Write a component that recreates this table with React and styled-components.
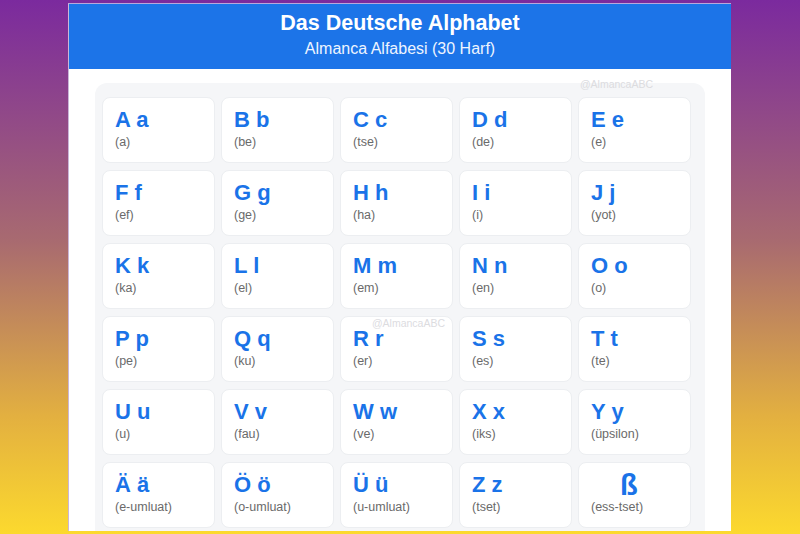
import styled, { createGlobalStyle } from 'styled-components';

const GlobalStyle = createGlobalStyle`
  html, body {
    margin: 0;
    padding: 0;
  }
  body {
    width: 800px;
    height: 534px;
    overflow: hidden;
    background: linear-gradient(180deg, #7b2a9e 0%, #a86a70 45%, #e3b040 78%, #fcd92e 100%);
    font-family: 'Liberation Sans', Arial, sans-serif;
  }
`;

const letters = [
  ['A a', '(a)'], ['B b', '(be)'], ['C c', '(tse)'], ['D d', '(de)'], ['E e', '(e)'],
  ['F f', '(ef)'], ['G g', '(ge)'], ['H h', '(ha)'], ['I i', '(i)'], ['J j', '(yot)'],
  ['K k', '(ka)'], ['L l', '(el)'], ['M m', '(em)'], ['N n', '(en)'], ['O o', '(o)'],
  ['P p', '(pe)'], ['Q q', '(ku)'], ['R r', '(er)'], ['S s', '(es)'], ['T t', '(te)'],
  ['U u', '(u)'], ['V v', '(fau)'], ['W w', '(ve)'], ['X x', '(iks)'], ['Y y', '(üpsilon)'],
  ['Ä ä', '(e-umluat)'], ['Ö ö', '(o-umluat)'], ['Ü ü', '(u-umluat)'], ['Z z', '(tset)'], ['ß', '(ess-tset)'],
];

function App() {
  return (
    <>
      <GlobalStyle />
      <Page>
        <Panel>
          <Header>
            <Title>Das Deutsche Alphabet</Title>
            <Subtitle>Almanca Alfabesi (30 Harf)</Subtitle>
          </Header>
          <Body>
            <Board>
              <Mark $top="-5px" $right="52px">@AlmancaABC</Mark>
              <Grid>
                {letters.map(([pair, name]) => (
                  <Card key={pair}>
                    {pair === 'R r' && <Mark $top="0" $right="7px">@AlmancaABC</Mark>}
                    <Letter $big={pair === 'ß'}>{pair}</Letter>
                    <Name>{name}</Name>
                  </Card>
                ))}
              </Grid>
            </Board>
          </Body>
        </Panel>
      </Page>
    </>
  );
}

export default App;

const Page = styled.div`
  padding-top: 3px;
  padding-left: 68px;
`;

const Panel = styled.div`
  box-sizing: border-box;
  width: 663px;
  height: 528px;
  overflow: hidden;
  background: #ffffff;
  border-top: 1px solid #b9a8dc;
  border-left: 1px solid #c9b6d8;
`;

const Header = styled.header`
  height: 65px;
  box-sizing: border-box;
  background: #1c74e8;
  color: #ffffff;
  text-align: center;
  padding-top: 6px;
`;

const Title = styled.h1`
  margin: 0;
  font-size: 21.5px;
  font-weight: 700;
  line-height: 26px;
`;

const Subtitle = styled.p`
  margin: 0;
  margin-top: 3px;
  font-size: 16px;
  line-height: 20px;
  color: #eef4ff;
`;

const Body = styled.div`
  padding: 14px 26px 0 26px;
`;

const Board = styled.div`
  position: relative;
  background: #f5f6f8;
  border-radius: 12px;
  padding: 14px 13px 14px 7px;
  height: 600px;
`;

const Grid = styled.div`
  display: grid;
  grid-template-columns: repeat(5, 113px);
  column-gap: 6px;
  row-gap: 7px;
`;

const Card = styled.div`
  position: relative;
  box-sizing: border-box;
  height: 66px;
  background: #ffffff;
  border: 1px solid #eceef1;
  border-radius: 8px;
  padding: 10px 12px 0 12px;
`;

const Letter = styled.div`
  font-size: ${p => (p.$big ? '29px' : '22px')};
  font-weight: 700;
  line-height: 24px;
  height: 24px;
  color: #1a73e8;
  padding-left: ${p => (p.$big ? '29px' : '0')};
  box-sizing: border-box;
  overflow: visible;
`;

const Name = styled.div`
  margin-top: 2px;
  font-size: 12.5px;
  line-height: 16px;
  color: #6a6a6a;
`;

const Mark = styled.span`
  position: absolute;
  top: ${p => p.$top};
  right: ${p => p.$right};
  font-size: 10.5px;
  color: #dcdcdf;
  line-height: 12px;
  white-space: nowrap;
`;
